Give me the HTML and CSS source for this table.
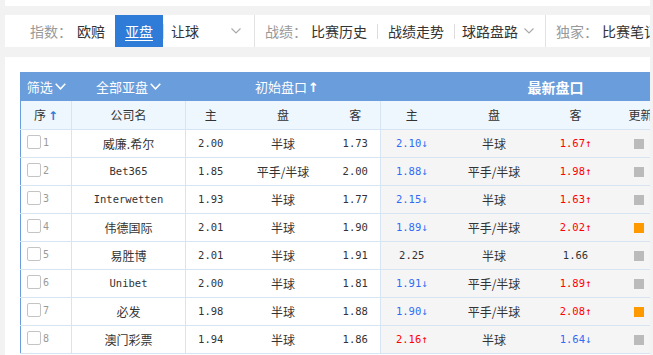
FILE: index.html
```html
<!DOCTYPE html>
<html lang="zh-CN">
<head>
    <meta charset="UTF-8">
    <title>亚盘</title>
    <link rel="stylesheet" href="styles.css">
</head>
<body>
    <div class="page">
        <div class="top-strip"></div>

        <div class="nav">
            <span class="nav-label first">指数：</span>
            <a class="nav-item">欧赔</a>
            <a class="nav-item active">亚盘</a>
            <i class="sep"></i>
            <a class="nav-item drop wide">让球<svg class="chev" viewBox="0 0 10 6"><polyline points="0.5,0.5 5,5 9.5,0.5"/></svg></a>
            <i class="divider"></i>
            <span class="nav-label">战绩：</span>
            <a class="nav-item">比赛历史</a>
            <i class="sep"></i>
            <a class="nav-item">战绩走势</a>
            <i class="sep"></i>
            <a class="nav-item drop">球路盘路<svg class="chev" viewBox="0 0 10 6"><polyline points="0.5,0.5 5,5 9.5,0.5"/></svg></a>
            <i class="divider"></i>
            <span class="nav-label">独家：</span>
            <a class="nav-item">比赛笔记</a>
        </div>

        <div class="card">
            <table class="odds">
                <colgroup>
                    <col style="width:51px"><col style="width:114px">
                    <col style="width:50px"><col style="width:95px"><col style="width:50px">
                    <col style="width:62px"><col style="width:103px"><col style="width:60px"><col style="width:70px">
                </colgroup>
                <tr class="head">
                    <td>筛选<svg class="hchev" viewBox="0 0 11 7"><polyline points="0.7,0.7 5.5,5.8 10.3,0.7"/></svg></td>
                    <td>全部亚盘<svg class="hchev" viewBox="0 0 11 7"><polyline points="0.7,0.7 5.5,5.8 10.3,0.7"/></svg></td>
                    <td colspan="3" class="init-title">初始盘口<span class="harrow">↑</span></td>
                    <td colspan="4" class="latest-title">最新盘口</td>
                </tr>
                <tr class="sub">
                    <td class="br">序<span class="sort">↑</span></td>
                    <td class="br">公司名</td>
                    <td>主</td><td>盘</td><td class="br">客</td>
                    <td>主</td><td>盘</td><td>客</td><td>更新</td>
                </tr>
                <tr>
                    <td class="br idx"><span class="check"></span>1</td>
                    <td class="br">威廉.希尔</td>
                    <td class="num">2.00</td><td>半球</td><td class="num br">1.73</td>
                    <td class="num now down">2.10↓</td><td class="now">半球</td><td class="num now up">1.67↑</td><td class="now"><span class="flag"></span></td>
                </tr>
                <tr>
                    <td class="br idx"><span class="check"></span>2</td>
                    <td class="br num">Bet365</td>
                    <td class="num">1.85</td><td>平手/半球</td><td class="num br">2.00</td>
                    <td class="num now down">1.88↓</td><td class="now">平手/半球</td><td class="num now up">1.98↑</td><td class="now"><span class="flag"></span></td>
                </tr>
                <tr>
                    <td class="br idx"><span class="check"></span>3</td>
                    <td class="br num">Interwetten</td>
                    <td class="num">1.93</td><td>半球</td><td class="num br">1.77</td>
                    <td class="num now down">2.15↓</td><td class="now">半球</td><td class="num now up">1.63↑</td><td class="now"><span class="flag"></span></td>
                </tr>
                <tr>
                    <td class="br idx"><span class="check"></span>4</td>
                    <td class="br">伟德国际</td>
                    <td class="num">2.01</td><td>半球</td><td class="num br">1.90</td>
                    <td class="num now down">1.89↓</td><td class="now">平手/半球</td><td class="num now up">2.02↑</td><td class="now"><span class="flag on"></span></td>
                </tr>
                <tr>
                    <td class="br idx"><span class="check"></span>5</td>
                    <td class="br">易胜博</td>
                    <td class="num">2.01</td><td>半球</td><td class="num br">1.91</td>
                    <td class="num now">2.25</td><td class="now">半球</td><td class="num now">1.66</td><td class="now"><span class="flag"></span></td>
                </tr>
                <tr>
                    <td class="br idx"><span class="check"></span>6</td>
                    <td class="br num">Unibet</td>
                    <td class="num">2.00</td><td>半球</td><td class="num br">1.81</td>
                    <td class="num now down">1.91↓</td><td class="now">平手/半球</td><td class="num now up">1.89↑</td><td class="now"><span class="flag"></span></td>
                </tr>
                <tr>
                    <td class="br idx"><span class="check"></span>7</td>
                    <td class="br">必发</td>
                    <td class="num">1.98</td><td>半球</td><td class="num br">1.88</td>
                    <td class="num now down">1.90↓</td><td class="now">平手/半球</td><td class="num now up">2.08↑</td><td class="now"><span class="flag on"></span></td>
                </tr>
                <tr>
                    <td class="br idx"><span class="check"></span>8</td>
                    <td class="br">澳门彩票</td>
                    <td class="num">1.94</td><td>半球</td><td class="num br">1.86</td>
                    <td class="num now up">2.16↑</td><td class="now">半球</td><td class="num now down">1.64↓</td><td class="now"><span class="flag"></span></td>
                </tr>
            </table>
        </div>
    </div>
</body>
</html>
```

FILE: styles.css
```css
:root {
    --page-bg: #f2f2f2;
    --blue: #2e7bd8;
    --head: #6a9ddb;
    --sub: #eef6fe;
    --line: #d7e4f2;
    --text: #333;
}

* {
    margin: 0;
    padding: 0;
    box-sizing: border-box;
}

body {
    background: var(--page-bg);
    font-family: "Noto Sans CJK SC", "Noto Sans", sans-serif;
    color: var(--text);
    overflow: hidden;
    height: 355px;
}

.page {
    margin: 0 3px 0 5px;
}

.top-strip {
    height: 6px;
    background: #fff;
}

/* 顶部导航 */
.nav {
    margin-top: 9px;
    height: 32px;
    background: #fff;
    display: flex;
    align-items: center;
    font-size: 14px;
    white-space: nowrap;
    overflow: hidden;
}

.nav-label {
    flex: none;
    width: 46px;
    padding-left: 10px;
    color: #999;
}

.nav-label.first {
    width: 62px;
    padding-left: 25px;
}

.nav-item {
    flex: none;
    height: 32px;
    line-height: 32px;
    padding: 0 10px;
    color: #333;
    text-decoration: none;
}

.nav-item.active {
    background: var(--blue);
    color: #fff;
    text-decoration: underline;
    text-underline-offset: 3px;
}

.nav-item.drop {
    display: flex;
    align-items: center;
    padding: 0 11px 0 7px;
}

.nav-item.drop.wide {
    width: 90px;
    padding-right: 13px;
    justify-content: space-between;
}

.chev {
    width: 10px;
    height: 6px;
    margin-left: 6px;
    fill: none;
    stroke: #aaa;
    stroke-width: 1.2;
}

.nav-item.drop.wide .chev {
    margin-left: 0;
}

.sep {
    flex: none;
    width: 1px;
    height: 15px;
    background: #ddd;
}

.divider {
    flex: none;
    width: 1px;
    height: 32px;
    background: #e2e2e2;
}

/* 表格 */
.card {
    margin-top: 10px;
    background: #fff;
    padding: 15px 0 0 15px;
    height: 298px;
    overflow: hidden;
}

.odds {
    border-collapse: collapse;
    table-layout: fixed;
    width: 655px;
    font-size: 12px;
}

.odds td {
    height: 28px;
    padding: 0;
    text-align: center;
    white-space: nowrap;
    border-bottom: 1px solid var(--line);
}

.odds td:first-child {
    border-left: 1px solid var(--head);
}

.odds td.br {
    border-right: 1px solid var(--line);
}

.head td {
    height: 29px;
    background: var(--head);
    color: #fff;
    font-size: 13px;
    border-bottom: none;
}

.hchev {
    width: 11px;
    height: 7px;
    margin-left: 2px;
    vertical-align: 2px;
    fill: none;
    stroke: #fff;
    stroke-width: 1.5;
}

.harrow {
    font-family: "DejaVu Sans", sans-serif;
    font-weight: bold;
    margin-left: 1px;
}

.head td.init-title {
    padding-left: 8px;
}

.head td.latest-title {
    text-align: left;
    padding-left: 147px;
    font-size: 14px;
    font-weight: bold;
}

.sub td {
    background: var(--sub);
}

.sort {
    color: var(--blue);
    font-family: "DejaVu Sans", sans-serif;
    font-weight: bold;
    margin-left: 2px;
}

.odds td.num {
    font-family: "DejaVu Sans Mono", "Liberation Mono", monospace;
    font-size: 10.5px;
}

.odds td.idx {
    text-align: left;
    padding-left: 6px;
    font-family: "DejaVu Sans Mono", monospace;
    font-size: 10px;
    color: #999;
}

.check {
    display: inline-block;
    width: 14px;
    height: 14px;
    border: 1px solid #c4c4c4;
    border-radius: 2px;
    vertical-align: middle;
    margin: -2px 2px 0 0;
}

.odds td.now {
    background: #f5f5f5;
}

.down {
    color: #2f6bf5;
}

.up {
    color: #f00;
}

.flag {
    display: inline-block;
    width: 10px;
    height: 10px;
    background: #bbb;
    vertical-align: middle;
    margin: -2px 0 0 -3px;
}

.flag.on {
    background: #f90;
}
```
